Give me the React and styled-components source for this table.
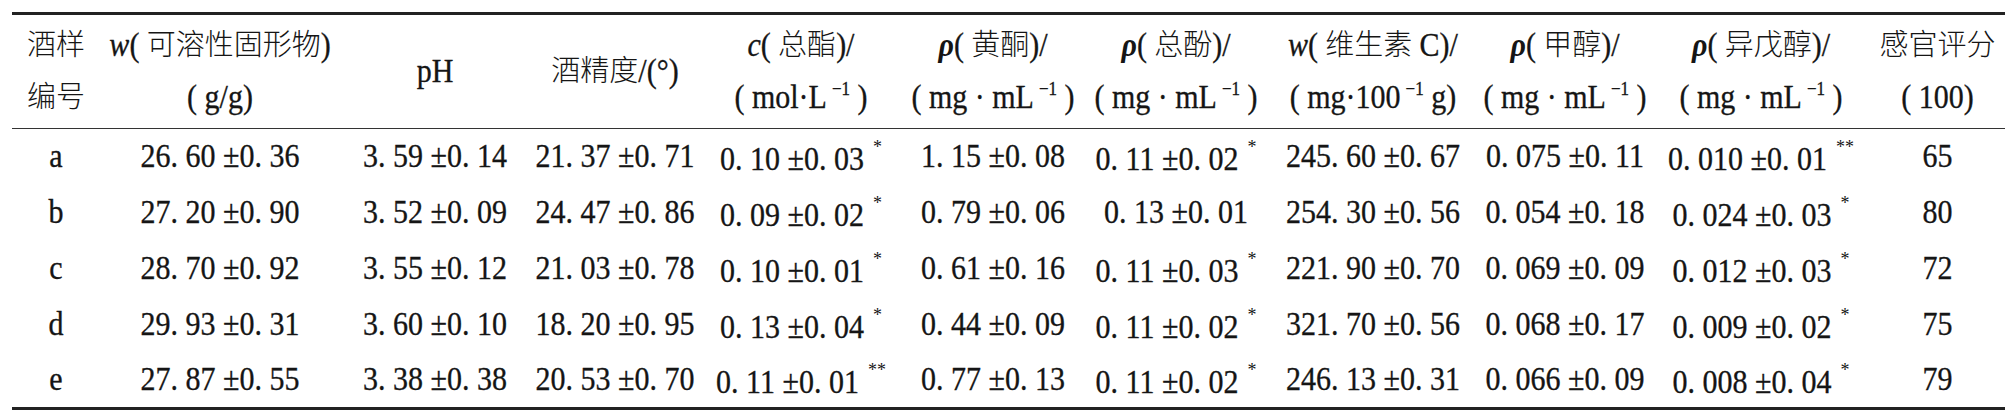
import styled, { createGlobalStyle } from "styled-components"

const GlobalStyle = createGlobalStyle`
    body {
        margin: 0;
        background: #fff;
    }
`

const columns = [88, 240, 190, 170, 202, 182, 184, 210, 174, 218, 135]

const rows = [
    ["a", "26.60±0.36", "3.59±0.14", "21.37±0.71", ["0.10±0.03", "*"], "1.15±0.08", ["0.11±0.02", "*"], "245.60±0.67", "0.075±0.11", ["0.010±0.01", "**"], "65"],
    ["b", "27.20±0.90", "3.52±0.09", "24.47±0.86", ["0.09±0.02", "*"], "0.79±0.06", "0.13±0.01", "254.30±0.56", "0.054±0.18", ["0.024±0.03", "*"], "80"],
    ["c", "28.70±0.92", "3.55±0.12", "21.03±0.78", ["0.10±0.01", "*"], "0.61±0.16", ["0.11±0.03", "*"], "221.90±0.70", "0.069±0.09", ["0.012±0.03", "*"], "72"],
    ["d", "29.93±0.31", "3.60±0.10", "18.20±0.95", ["0.13±0.04", "*"], "0.44±0.09", ["0.11±0.02", "*"], "321.70±0.56", "0.068±0.17", ["0.009±0.02", "*"], "75"],
    ["e", "27.87±0.55", "3.38±0.38", "20.53±0.70", ["0.11±0.01", "**"], "0.77±0.13", ["0.11±0.02", "*"], "246.13±0.31", "0.066±0.09", ["0.008±0.04", "*"], "79"],
]

// typeset style: a space after each decimal point and before the ±
const fmt = (s) => s.replace(/\./g, ". ").replace("±", " ±")

export default function App() {
    const perL = <Lat>( mg · mL<Sup>−1</Sup> )</Lat>

    const header = [
        [<>酒样</>, <>编号</>],
        [<><It>w</It><Lat>(</Lat> 可溶性固形物<Lat>)</Lat></>, <Lat>( g/g)</Lat>],
        [<Lat>pH</Lat>],
        [<>酒精度<Lat>/(°)</Lat></>],
        [<><It>c</It><Lat>(</Lat> 总酯<Lat>)/</Lat></>, <Lat>( mol·L<Sup>−1</Sup> )</Lat>],
        [<><Rho>ρ</Rho><Lat>(</Lat> 黄酮<Lat>)/</Lat></>, perL],
        [<><Rho>ρ</Rho><Lat>(</Lat> 总酚<Lat>)/</Lat></>, perL],
        [<><It>w</It><Lat>(</Lat> 维生素 <Lat>C)/</Lat></>, <Lat>( mg·100<Sup>−1</Sup> g)</Lat>],
        [<><Rho>ρ</Rho><Lat>(</Lat> 甲醇<Lat>)/</Lat></>, perL],
        [<><Rho>ρ</Rho><Lat>(</Lat> 异戊醇<Lat>)/</Lat></>, perL],
        [<>感官评分</>, <Lat>( 100)</Lat>],
    ]

    return (
        <>
            <GlobalStyle />
            <Page>
                <Table>
                    <colgroup>
                        {columns.map((w, i) => <col key={i} style={{ width: w }} />)}
                    </colgroup>
                    <thead>
                        <tr>
                            {header.map((lines, i) => (
                                <HeadCell key={i}>
                                    {lines.map((l, j) => <HeadLine key={j}>{l}</HeadLine>)}
                                </HeadCell>
                            ))}
                        </tr>
                    </thead>
                    <tbody>
                        {rows.map((row, r) => (
                            <Row key={r}>
                                {row.map((v, c) => (
                                    <Cell key={c}>
                                        {Array.isArray(v)
                                            ? <Num>{fmt(v[0])}<Star>{v[1]}</Star></Num>
                                            : <Num>{fmt(v)}</Num>}
                                    </Cell>
                                ))}
                            </Row>
                        ))}
                    </tbody>
                </Table>
            </Page>
        </>
    )
}

const Page = styled.div`
    padding: 12px 7px 0 12px;
`
const Table = styled.table`
    width: 1993px;
    table-layout: fixed;
    border-collapse: collapse;
    border-top: 3px solid #222;
    border-bottom: 3px solid #222;
    font-family: "Liberation Serif", "Noto Sans CJK SC", serif;
    font-size: 29px;
    font-weight: 300;
    color: #151515;
`
const HeadCell = styled.th`
    padding: 4px 0 5px;
    font-weight: 300;
    text-align: center;
    vertical-align: middle;
    white-space: nowrap;
    border-bottom: 1.5px solid #333;
`
const HeadLine = styled.div`
    height: 52px;
    line-height: 52px;
`
const Lat = styled.span`
    display: inline-block;
    font-family: "Liberation Serif", serif;
    font-size: 30px;
    font-weight: 400;
    line-height: 1;
    white-space: pre;
    -webkit-text-stroke: 0.3px currentColor;
    transform: scaleY(1.1);
`
const It = styled(Lat)`
    font-style: italic;
`
const Rho = styled(Lat)`
    font-style: italic;
    font-weight: 700;
    -webkit-text-stroke: 0;
`
const Sup = styled.span`
    font-size: 17px;
    vertical-align: 0.7em;
    margin-left: 5px;
`
const Row = styled.tr`
    height: 56px;
`
const Cell = styled.td`
    padding: 0;
    text-align: center;
    vertical-align: middle;
    white-space: nowrap;
`
const Num = styled.span`
    display: inline-block;
    font-family: "Liberation Serif", serif;
    font-size: 30px;
    font-weight: 400;
    line-height: 1;
    white-space: pre;
    -webkit-text-stroke: 0.3px currentColor;
    transform: scaleY(1.1);
`
const Star = styled.span`
    font-size: 18px;
    vertical-align: 0.85em;
    margin-left: 9px;
    -webkit-text-stroke: 0;
`
